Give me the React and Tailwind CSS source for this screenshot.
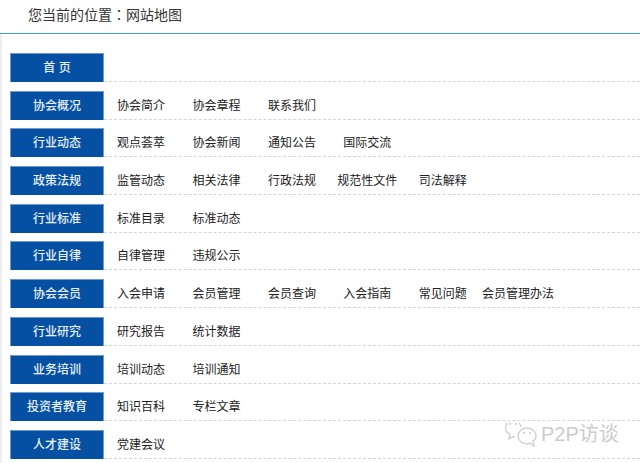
const rows = [
  { title: '首 页', links: [] },
  { title: '协会概况', links: ['协会简介', '协会章程', '联系我们'] },
  { title: '行业动态', links: ['观点荟萃', '协会新闻', '通知公告', '国际交流'] },
  { title: '政策法规', links: ['监管动态', '相关法律', '行政法规', '规范性文件', '司法解释'] },
  { title: '行业标准', links: ['标准目录', '标准动态'] },
  { title: '行业自律', links: ['自律管理', '违规公示'] },
  { title: '协会会员', links: ['入会申请', '会员管理', '会员查询', '入会指南', '常见问题', '会员管理办法'] },
  { title: '行业研究', links: ['研究报告', '统计数据'] },
  { title: '业务培训', links: ['培训动态', '培训通知'] },
  { title: '投资者教育', links: ['知识百科', '专栏文章'] },
  { title: '人才建设', links: ['党建会议'] },
];

const App = () => {
  return (
    <div className="relative w-[640px] h-[463px] overflow-hidden bg-white font-['Liberation_Sans','Noto_Sans_CJK_SC',sans-serif]">
      {/* Breadcrumb */}
      <div className="h-[34px] pl-[28px] pt-[5px] border-b border-[#3ba0d2] text-[14px] leading-[18px] text-[#333]">
        您当前的位置<span className="font-['Noto_Sans_CJK_TC',sans-serif]">：</span>网站地图
      </div>

      <div className="h-[429px] pt-[19px] pl-[8px] border-l-2 border-[#eeeeee]">
        {rows.map((row) => (
          <div key={row.title} className="flex h-[37.7px]">
            <div className="w-[94px] h-[29px] shrink-0 bg-[#0650a4] border border-b-0 border-[#6d9bd0] text-[#e8f0f8] text-[12px] font-medium leading-[28px] text-center">
              {row.title}
            </div>
            <div className="flex-1 h-[29px] flex border-b border-dashed border-[#d4d4d4] text-[12px] leading-[17px] text-[#222]">
              {row.links.map((link, i) => (
                <span key={link} className={i === 0 ? 'w-[75.4px] -ml-[0.6px] pt-[7px] text-center whitespace-nowrap' : 'w-[75.4px] pt-[7px] text-center whitespace-nowrap'}>
                  {link}
                </span>
              ))}
            </div>
          </div>
        ))}
      </div>

      {/* Watermark */}
      <div className="absolute left-[504px] top-[420px] flex items-center gap-[3px]">
        <svg width="34" height="28" viewBox="0 0 34 28" fill="none" stroke="#d2d2d2" strokeWidth="1.4">
          <path d="M3 3c-2 3-2 7 0 9 1 1 2 2 3 2l-1 5 6-3" />
          <path d="M15 3c1 1 2 2 2 4" />
          <path d="M23 8c-5 0-9 3.500-9 8s4 8 9 8c1 0 2 0 3-1l4 3-1-5c2-1 3-3 3-5 0-4.500-4-8-9-8z" />
          <circle cx="6" cy="4" r="1" fill="#c8c8c8" stroke="none" />
          <circle cx="12" cy="4" r="1" fill="#c8c8c8" stroke="none" />
          <circle cx="20" cy="13" r="1" fill="#c8c8c8" stroke="none" />
          <circle cx="26" cy="13" r="1" fill="#c8c8c8" stroke="none" />
        </svg>
        <span className="text-[20px] leading-[26px] text-[#cccccc]">P2P访谈</span>
      </div>
    </div>
  );
};

export default App;
